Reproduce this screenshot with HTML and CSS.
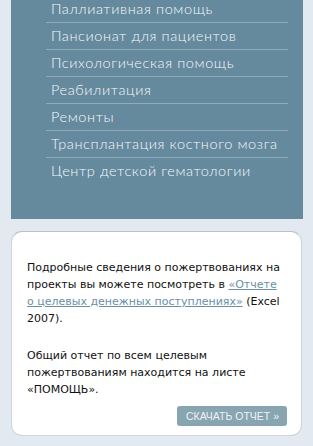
FILE: index.html
```html
<!DOCTYPE html>
<html lang="ru">
<head>
<meta charset="utf-8">
<link rel="stylesheet" href="styles.css">
</head>
<body>
<div class="page">
  <nav class="panel">
    <ul class="menu">
      <li class="menu-item first">Паллиативная помощь</li>
      <li class="menu-item">Пансионат для пациентов</li>
      <li class="menu-item">Психологическая помощь</li>
      <li class="menu-item">Реабилитация</li>
      <li class="menu-item">Ремонты</li>
      <li class="menu-item">Трансплантация костного мозга</li>
      <li class="menu-item">Центр детской гематологии</li>
    </ul>
  </nav>
  <div class="card">
    <p class="para">Подробные сведения о пожертвованиях на проекты вы можете посмотреть в <a class="link" href="#">«Отчете о целевых денежных поступлениях»</a> (Excel 2007).</p>
    <p class="para second">Общий отчет по всем целевым пожертвованиям находится на листе «ПОМОЩЬ».</p>
    <div class="actions"><a class="btn" href="#">СКАЧАТЬ ОТЧЕТ »</a></div>
  </div>
</div>
</body>
</html>
```
FILE: styles.css
```css
html, body {
  margin: 0;
  padding: 0;
  background: #e2e9f0;
  width: 313px;
  height: 446px;
  overflow: hidden;
}
.page {
  padding: 0 10px 0 11px;
}
.panel {
  background: #658a9e;
  width: 292px;
  padding: 0 15px 35px 35px;
  box-sizing: border-box;
  overflow: hidden;
}
.menu {
  list-style: none;
  margin: -5px 0 0 0;
  padding: 0;
}
.menu-item {
  height: 26px;
  border-top: 1px solid #8eaabb;
  padding-left: 5px;
  font-family: "Lato", sans-serif;
  font-weight: 300;
  font-size: 14.5px;
  letter-spacing: 0.6px;
  line-height: 25px;
  color: #f6f8fa;
  white-space: nowrap;
}
.menu-item.first {
  border-top: 1px solid transparent;
}
.card {
  margin-top: 12px;
  width: 291px;
  box-sizing: border-box;
  background: #ffffff;
  border: 1px solid #cdd5dd;
  border-top-color: #b8c0c8;
  border-radius: 11px;
  padding: 27px 14px 9px 15px;
}
.para {
  margin: 0 6px 0 0;
  font-family: "DejaVu Sans", sans-serif;
  font-size: 11px;
  line-height: 17px;
  color: #111111;
}
.para.second {
  margin-top: 20px;
}
.link {
  color: #6a8fa8;
  text-decoration: underline;
}
.actions {
  display: flex;
  justify-content: flex-end;
  margin-top: 8px;
}
.btn {
  display: inline-block;
  background: #89a5b1;
  color: #eef3f5;
  border-radius: 3px;
  padding: 0 8px 0 9px;
  height: 20px;
  line-height: 20px;
  font-family: "Liberation Sans", sans-serif;
  font-size: 10.5px;
  text-decoration: none;
}
```
